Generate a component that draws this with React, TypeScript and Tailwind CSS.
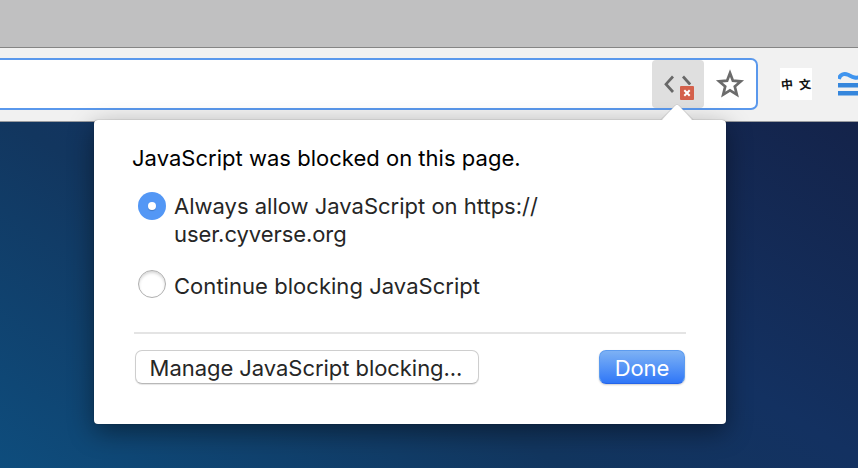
function BlockedScriptIcon() {
  return (
    <svg viewBox="0 0 52 46" className="h-[46px] w-[52px]">
      <path d="M21 15.5 L14 23.2 L21 31" fill="none" stroke="#686868" strokeWidth="2.7" />
      <path d="M31 15.5 L38.2 23.5" fill="none" stroke="#686868" strokeWidth="2.7" />
      <rect x="27" y="24" width="16" height="16" rx="1" fill="#dfdfdf" />
      <rect x="28" y="25" width="14" height="14" rx="1" fill="#d4614c" />
      <path d="M32.3 29.3 L37.7 34.7 M37.7 29.3 L32.3 34.7" stroke="#fff" strokeWidth="2" />
    </svg>
  );
}

function StarIcon() {
  return (
    <svg viewBox="0 0 30 30" className="h-[30px] w-[30px]">
      <path
        fill="none"
        stroke="#6b6b6b"
        strokeWidth="2.7"
        d="M15 4 L17.9 11.7 L25.8 12.4 L19.8 17.6 L21.8 25.6 L15 21.4 L8.2 25.6 L10.2 17.6 L4.2 12.4 L12.1 11.7 Z"
      />
    </svg>
  );
}

function Toolbar() {
  return (
    <div className="flex h-[75px] items-start border-t border-b border-t-[#858585] border-b-[#999b9f] bg-[#f1f1f1] pt-[10px]">
      <div className="flex h-[52px] w-[758px] shrink-0 items-stretch justify-end rounded-r-[7px] border-2 border-l-0 border-[#5a98ec] bg-white">
        <div className="flex w-[52px] items-center justify-center rounded-sm bg-[#dfdfdf]">
          <BlockedScriptIcon />
        </div>
        <div className="flex w-[52px] items-center justify-center">
          <StarIcon />
        </div>
      </div>
      <div className="mt-[10px] ml-[22px] flex h-8 w-8 shrink-0 items-center justify-center gap-[5px] bg-white font-['Noto_Sans_CJK_SC',sans-serif] text-[12px] leading-none font-bold text-[#111]">
        <span className="-rotate-6">中</span>
        <span className="-rotate-6">文</span>
      </div>
      <svg viewBox="0 0 20 26" className="mt-[12px] ml-[26px] h-[26px] w-5 shrink-0">
        <path
          fill="none"
          stroke="#3f94ee"
          strokeWidth="4"
          d="M.8 9 C2 4.5 6 3 10 4.8 C14 6.7 17 9 23 6.7"
        />
        <path stroke="#3586dc" strokeWidth="4.5" d="M0 15.2 H20 M0 23.2 H20" />
      </svg>
    </div>
  );
}

function PermissionBubble() {
  return (
    <div className="absolute top-[120px] left-[94px] h-[304px] w-[632px] rounded-[4px] bg-white px-10 font-['Inter','Liberation_Sans',sans-serif] text-[22px] leading-7 text-[#262626] shadow-[0_0_1px_rgba(0,0,0,.6),0_8px_26px_rgba(0,0,0,.42)]">
      <svg viewBox="0 0 34 18" className="absolute -top-[17px] left-[566px] h-[18px] w-[34px]">
        <path d="M0 17 L2 17 L15.5 2 Q17 .5 18.5 2 L32 17 L34 17 V18 H0 Z" fill="#fff" />
        <path d="M1 16.5 L15.5 2 Q17 .5 18.5 2 L33 16.5" fill="none" stroke="#999" strokeOpacity=".5" strokeWidth=".7" />
      </svg>
      <h1 className="-ml-[2px] pt-6 tracking-[0.02px] whitespace-nowrap text-black">
        JavaScript was blocked on this page.
      </h1>
      <div className="mt-5 flex gap-2 pl-1">
        <span className="flex h-7 w-7 shrink-0 items-center justify-center rounded-full bg-[#5397f5]">
          <span className="h-2 w-2 rounded-full bg-white shadow-[0_1px_1px_rgba(0,0,0,.2)]" />
        </span>
        <p className="whitespace-nowrap">
          Always allow JavaScript on https://
          <br />
          <span className="tracking-[-0.06px]">user.cyverse.org</span>
        </p>
      </div>
      <div className="mt-[22px] flex gap-2 pl-1">
        <span className="h-7 w-7 shrink-0 rounded-full border border-[#b0b0b0] bg-white shadow-[inset_0_2px_3px_rgba(0,0,0,.16)]" />
        <p className="pt-[2px] tracking-[0.04px] whitespace-nowrap">Continue blocking JavaScript</p>
      </div>
      <div className="mt-[32px] h-[2px] bg-[#e4e4e4]" />
      <div className="mt-4 flex justify-between px-px">
        <button className="h-[34px] w-[344px] rounded-[7px] border border-[#cecece] border-b-[#b8b8b8] bg-white pt-[2px] pr-[2px] tracking-[-0.05px] whitespace-nowrap shadow-[0_1px_1px_rgba(0,0,0,.1)]">
          Manage JavaScript blocking...
        </button>
        <button className="h-[34px] w-[86px] rounded-[7px] border border-[#5c9bef] border-b-[#2464e8] bg-linear-to-b from-[#7db1f4] to-[#2f76f7] pt-[2px] tracking-[-0.1px] text-white shadow-[0_1px_2px_rgba(0,0,0,.2)]">
          Done
        </button>
      </div>
    </div>
  );
}

export default function App() {
  return (
    <main className="relative flex h-[468px] w-[858px] flex-col overflow-hidden bg-[#13315d]">
      <div className="h-[47px] shrink-0 bg-[#c0c0c1]" />
      <Toolbar />
      <div className="flex-1 bg-[linear-gradient(32deg,#0e4d7d_0%,#12365f_40%,#133161_62%,#14234a_100%)]" />
      <PermissionBubble />
    </main>
  );
}
